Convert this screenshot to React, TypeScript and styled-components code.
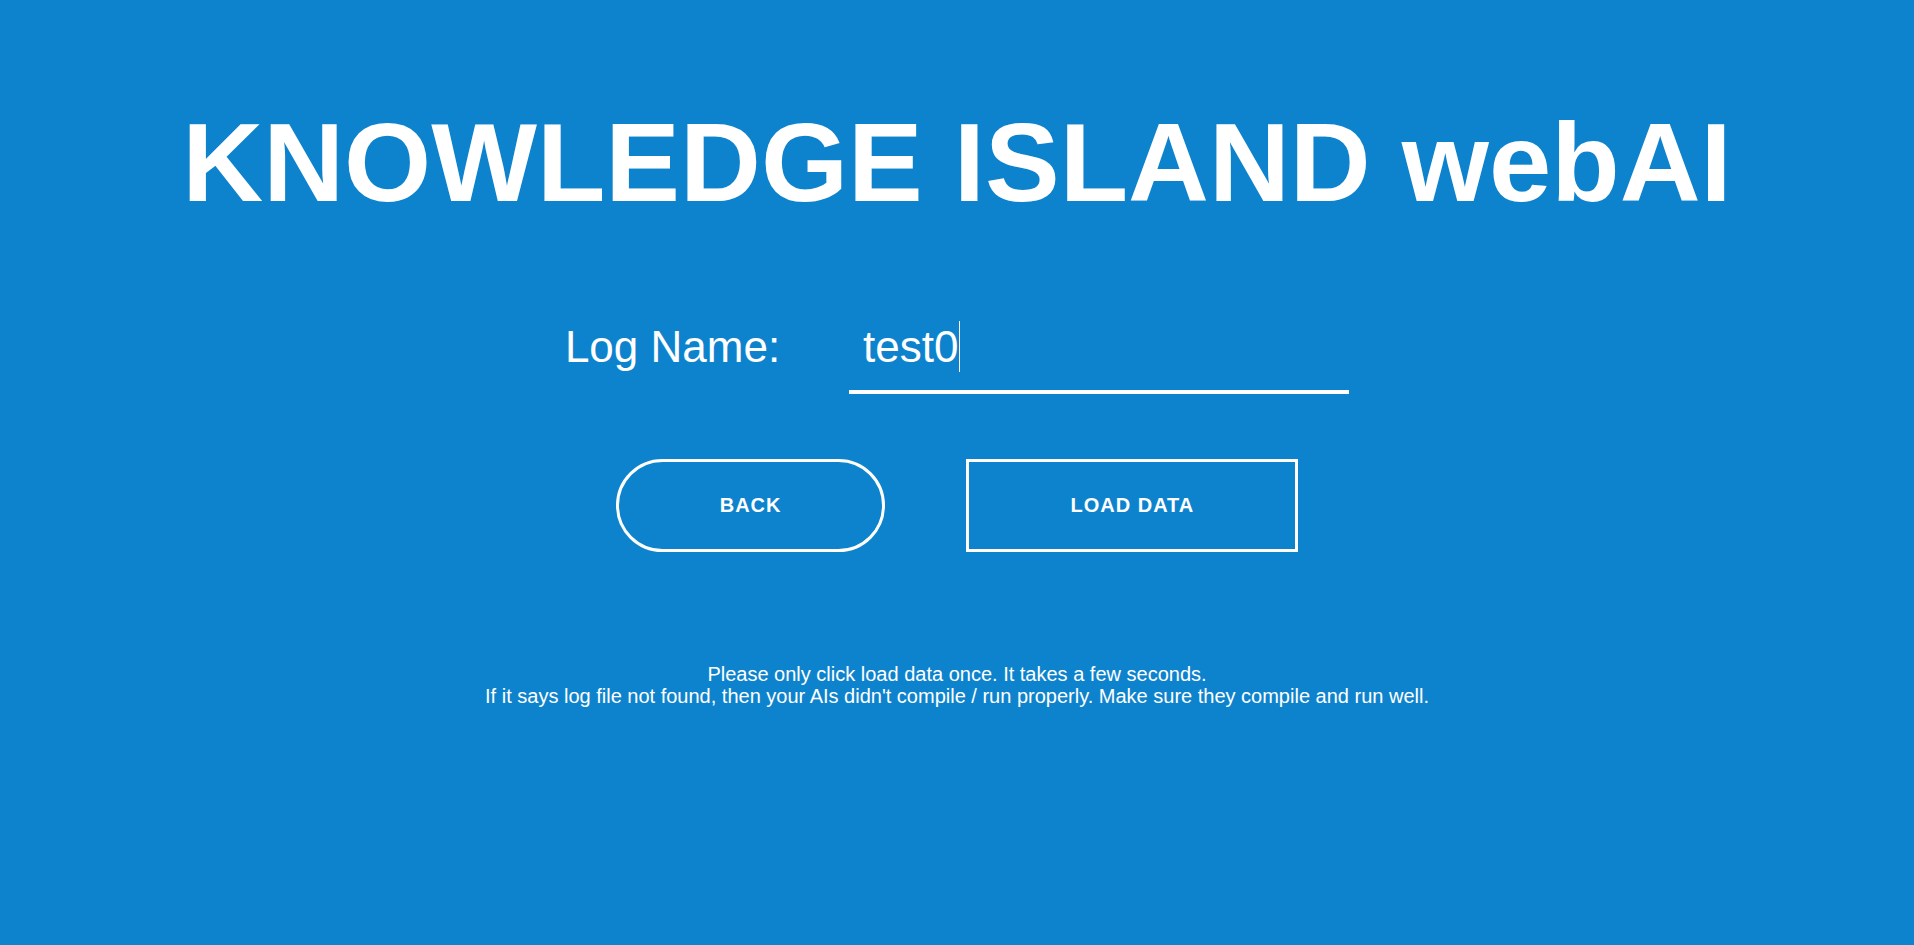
import React from "react";
import styled, { createGlobalStyle } from "styled-components";

const GlobalStyle = createGlobalStyle`
  html, body {
    margin: 0;
    padding: 0;
    background: #0e83cd;
    min-height: 100%;
  }
  body {
    font-family: "Liberation Sans", Arial, sans-serif;
    color: #fff;
  }
`;

const Page = styled.main`
  min-height: 945px;
  box-sizing: border-box;
  background: #0e83cd;
  padding-top: 99px;
  display: flex;
  flex-direction: column;
  align-items: center;
  font-family: "Liberation Sans", Arial, sans-serif;
  color: #fff;
`;

const Title = styled.h1`
  margin: 0;
  font-size: 112px;
  line-height: 128px;
  font-weight: 700;
  text-align: center;
  white-space: nowrap;
`;

const NameRow = styled.div`
  margin-top: 85px;
  display: flex;
  align-items: baseline;
  gap: 69px;
`;

const Label = styled.label`
  font-size: 44px;
  line-height: 50px;
  white-space: nowrap;
`;

const InputWrap = styled.div`
  position: relative;
  display: inline-flex;
`;

const NameInput = styled.input`
  width: 500px;
  box-sizing: border-box;
  background: transparent;
  border: none;
  border-bottom: 4px solid #fff;
  outline: none;
  color: #fff;
  caret-color: transparent;
  font-family: "Liberation Sans", Arial, sans-serif;
  font-size: 44px;
  line-height: 50px;
  height: 82px;
  padding: 10px 14px 18px;
  margin: 0;
`;

const Caret = styled.span`
  position: absolute;
  left: 110px;
  top: 9px;
  width: 1px;
  height: 51px;
  background: #fff;
  pointer-events: none;
`;

const ButtonRow = styled.div`
  margin-top: 65px;
  display: flex;
  gap: 81px;
`;

const Button = styled.button<{ $round?: boolean }>`
  border: 3px solid #fff;
  border-radius: ${(p) => (p.$round ? "50px" : "0")};
  background: none;
  color: #fff;
  font-family: "Liberation Sans", Arial, sans-serif;
  font-size: 20px;
  line-height: 23px;
  font-weight: 700;
  letter-spacing: 1px;
  text-transform: uppercase;
  padding: 32px 101px;
  cursor: pointer;
`;

const Note = styled.p`
  margin: 111px 0 0;
  font-size: 20px;
  line-height: 22px;
  text-align: center;
`;

export default function App() {
  return (
    <>
      <GlobalStyle />
      <Page>
        <Title>KNOWLEDGE ISLAND webAI</Title>
        <NameRow>
          <Label htmlFor="logname">Log Name:</Label>
          <InputWrap>
            <NameInput id="logname" defaultValue="test0" />
            <Caret />
          </InputWrap>
        </NameRow>
        <ButtonRow>
          <Button $round>Back</Button>
          <Button>Load Data</Button>
        </ButtonRow>
        <Note>
          Please only click load data once. It takes a few seconds.
          <br />
          If it says log file not found, then your AIs didn't compile / run properly. Make sure they compile and run well.
        </Note>
      </Page>
    </>
  );
}
